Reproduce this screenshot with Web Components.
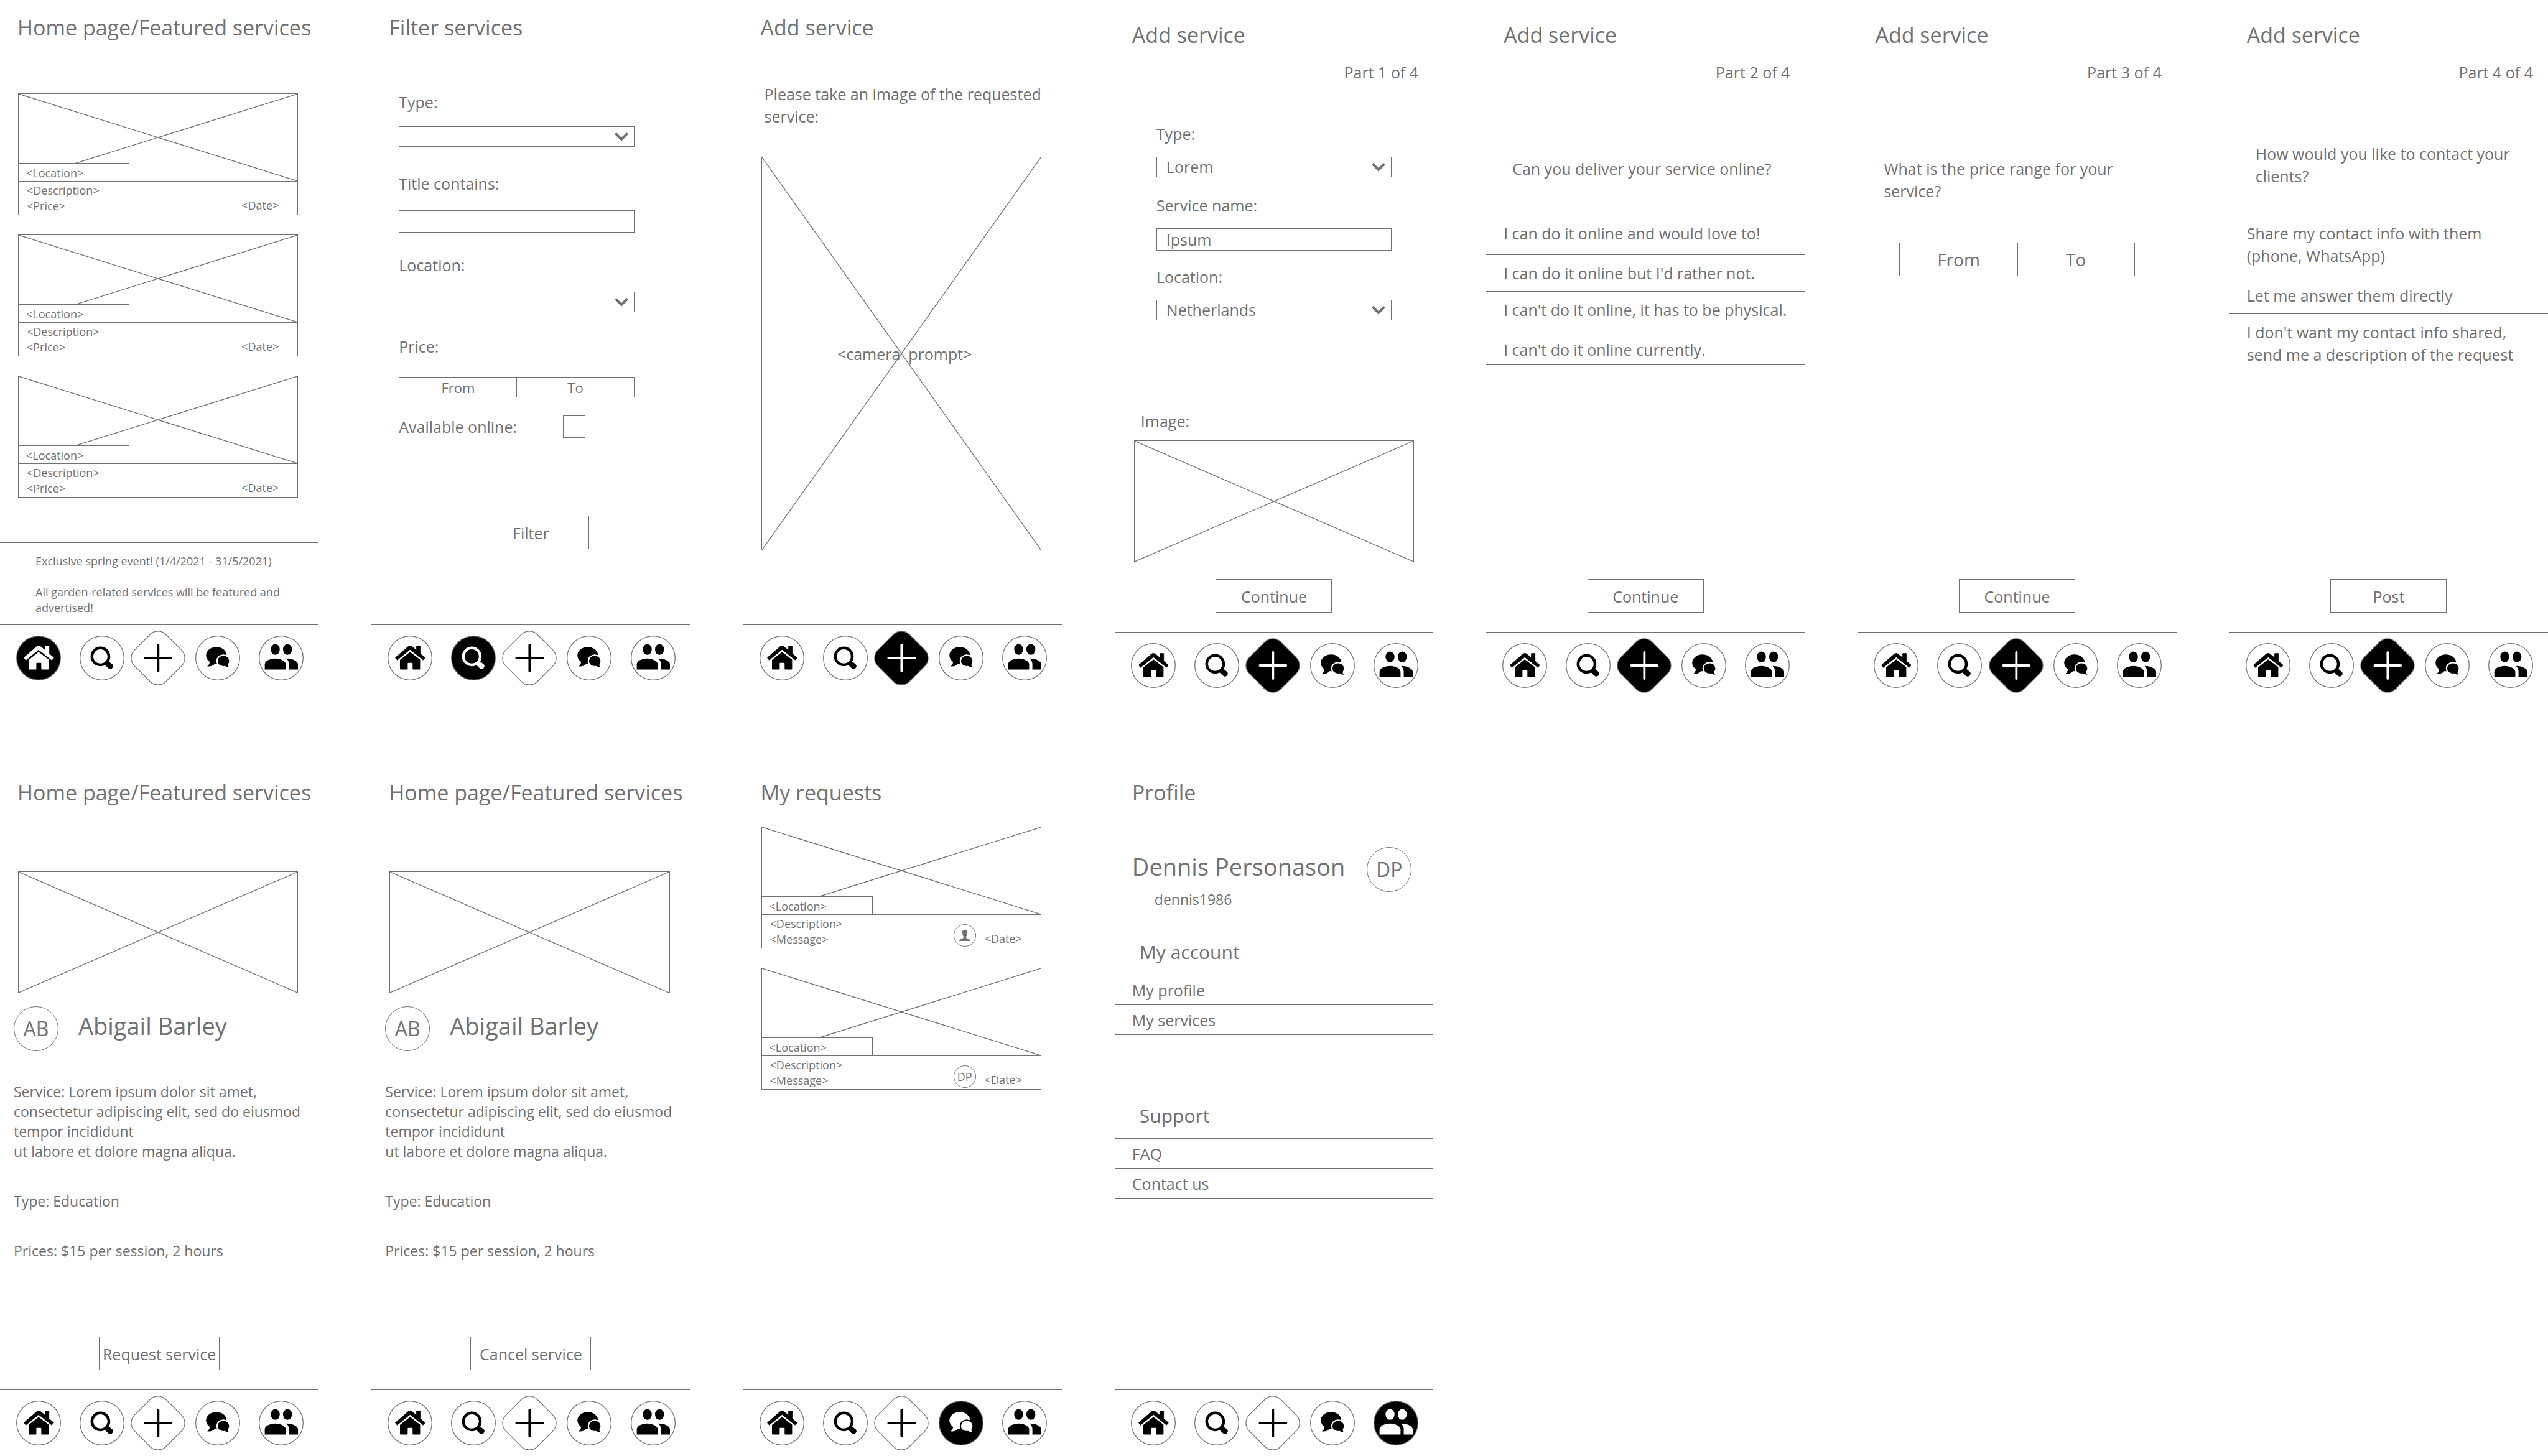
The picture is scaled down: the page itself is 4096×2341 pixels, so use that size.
<!DOCTYPE html>
<html lang="en">
<head>
<meta charset="utf-8">
<title>Service app wireframes</title>
<style>
  :root { --ink: #707070; --paper: #fff; --solid: #000; }
  body { margin: 0; background: var(--paper); color: var(--ink); font: 25px/36px "Open Sans", "Noto Sans", sans-serif; }
</style>
</head>
<body>
<wf-board>
  <wf-screen heading="Home page/Featured services" active="home">
    <wf-stack space="wide">
      <wf-card note="&lt;Price&gt;"></wf-card>
      <wf-card note="&lt;Price&gt;"></wf-card>
      <wf-card note="&lt;Price&gt;"></wf-card>
    </wf-stack>
    <wf-notice slot="foot">
      <p>Exclusive spring event! (1/4/2021 - 31/5/2021)</p>
      <p>All garden-related services will be featured and advertised!</p>
    </wf-notice>
  </wf-screen>

  <wf-screen heading="Filter services" active="search">
    <wf-filter-form></wf-filter-form>
  </wf-screen>

  <wf-screen heading="Add service" active="add">
    <wf-camera>Please take an image of the requested service:</wf-camera>
  </wf-screen>

  <wf-screen heading="Add service" active="add" step="1">
    <wf-service-form></wf-service-form>
    <wf-action slot="foot" label="Continue"></wf-action>
  </wf-screen>

  <wf-screen heading="Add service" active="add" step="2">
    <wf-question>Can you deliver your service online?</wf-question>
    <wf-options>
      <wf-option align="start">I can do it online and would love to!</wf-option>
      <wf-option>I can do it online but I'd rather not.</wf-option>
      <wf-option>I can't do it online, it has to be physical.</wf-option>
      <wf-option align="end">I can't do it online currently.</wf-option>
    </wf-options>
    <wf-action slot="foot" label="Continue"></wf-action>
  </wf-screen>

  <wf-screen heading="Add service" active="add" step="3">
    <wf-question>What is the price range for your service?</wf-question>
    <wf-range size="large"></wf-range>
    <wf-action slot="foot" label="Continue"></wf-action>
  </wf-screen>

  <wf-screen heading="Add service" active="add" step="4">
    <wf-question tall>How would you like to contact your clients?</wf-question>
    <wf-options>
      <wf-option align="start" lines="2">Share my contact info with them (phone, WhatsApp)</wf-option>
      <wf-option>Let me answer them directly</wf-option>
      <wf-option lines="2">I don't want my contact info shared, send me a description of the request</wf-option>
    </wf-options>
    <wf-action slot="foot" label="Post"></wf-action>
  </wf-screen>

  <wf-screen heading="Home page/Featured services">
    <wf-service></wf-service>
    <wf-action slot="foot" label="Request service" wide></wf-action>
  </wf-screen>

  <wf-screen heading="Home page/Featured services">
    <wf-service></wf-service>
    <wf-action slot="foot" label="Cancel service" wide></wf-action>
  </wf-screen>

  <wf-screen heading="My requests" active="chat">
    <wf-stack>
      <wf-card note="&lt;Message&gt;"><wf-avatar size="small"></wf-avatar></wf-card>
      <wf-card note="&lt;Message&gt;"><wf-avatar size="small">DP</wf-avatar></wf-card>
    </wf-stack>
  </wf-screen>

  <wf-screen heading="Profile" active="people">
    <wf-profile></wf-profile>
  </wf-screen>
</wf-board>

<script>
const define = (name, css, html) => {
  const template = document.createElement('template');
  customElements.define(name, class extends HTMLElement {
    constructor() {
      super();
      this.attachShadow({ mode: 'open' });
    }
    connectedCallback() {
      if (this.shadowRoot.childNodes.length) return;
      const markup = typeof html === 'function' ? html(this) : html;
      template.innerHTML = `<style>*{box-sizing:border-box}:host{display:block;box-sizing:border-box}h2,h3,p{margin:0;font-weight:400}button,input,select{font:inherit;color:inherit;margin:0;border-radius:0;outline:0}${css}</style>${markup}`;
      this.shadowRoot.append(template.content.cloneNode(true));
    }
  });
};
const escape = text => text.replace(/&/g, '&amp;').replace(/</g, '&lt;').replace(/>/g, '&gt;');

/* Board: seven phone screens per row */
define('wf-board', `
  :host { display: grid; grid-template-columns: repeat(7, minmax(0, 1fr)); align-items: start; column-gap: 85px; row-gap: 109px; }
`, '<slot></slot>');

/* Phone screen: heading, optional step counter, content, footer, tab bar */
define('wf-screen', `
  :host { display: flex; flex-direction: column; min-height: 1109px; }
  :host([step]) { margin-top: 12px; }
  h2 { font-size: 34px; line-height: 44px; padding: 22px 0 0 28px; white-space: nowrap; }
  .step { line-height: 34px; margin-top: 21px; padding-right: 24px; text-align: right; }
  .content { display: flex; flex-direction: column; flex: 1; }
`, el => `
  <h2>${el.getAttribute('heading')}</h2>
  ${el.hasAttribute('step') ? `<p class="step">Part ${el.getAttribute('step')} of 4</p>` : ''}
  <div class="content"><slot></slot></div>
  <slot name="foot"></slot>
  <wf-tabs active="${el.getAttribute('active') || ''}"></wf-tabs>
`);

/* Tab bar */
const tabs = [
  ['home', 'Home', '<path stroke-width="2" d="M36 103 96 51Q105 44 114 51L135 68V50Q135 48 137 48H151Q153 48 153 50V84L175 103 166 114 105 65 45 114Z"/><path d="M105 76 58 113V155Q58 158 61 158H91Q94 158 94 155V130Q94 127 97 127H114Q117 127 117 130V155Q117 158 120 158H149Q152 158 152 155V112Z"/>'],
  ['search', 'Search', '<circle cx="97" cy="97" r="39.5" fill="none" stroke-width="13"/><path d="M116 135 133 152A13.5 13.5 0 0 0 153 134L137 121Q132 124 127 118L116 128Q121 133 116 135Z"/>'],
  ['add', 'Add', '<path fill="none" stroke-width="11" stroke-linecap="round" d="M1-61V61M-60 0H62"/>'],
  ['chat', 'Messages', '<ellipse cx="98" cy="92" rx="48" ry="39"/><path d="M66 116Q70 134 55 143 80 146 92 129Z"/><ellipse cx="131" cy="118" rx="33" ry="30" class="gap"/><ellipse cx="131" cy="118" rx="27" ry="24"/><path d="M154 130Q150 141 158 148 145 148 136 140Z"/>'],
  ['people', 'Profile', '<ellipse cx="77" cy="64" rx="21" ry="25"/><ellipse cx="134" cy="64" rx="21" ry="25"/><path d="M28 158V134C28 117 55 107 77 107S126 119 126 134V158Z"/><path d="M129 107C160 107 183 121 183 134V158H141V134Q141 119 129 107Z"/>']
];
define('wf-tabs', `
  :host { border-top: 1px solid var(--ink); height: 105px; }
  nav { display: flex; justify-content: space-between; align-items: center; padding: 10px 24px 0 26px; }
  a { display: block; width: 72px; height: 86px; padding: 7px 0; }
  a.add { width: 84px; margin: 0 -12px 0 -18px; padding: 1px 0; }
  svg { display: block; width: 100%; height: 100%; overflow: visible; }
  .frame { fill: var(--paper); stroke: var(--ink); stroke-width: 3.5; }
  .icon { fill: var(--solid); stroke: var(--solid); stroke-width: 0; stroke-linejoin: round; }
  .gap { fill: var(--paper); }
  .on .frame { fill: var(--solid); }
  .on .icon { fill: var(--paper); stroke: var(--paper); }
  .on .gap { fill: var(--solid); }
`, el => `<nav>${tabs.map(([id, name, art]) => `
  <a href="#${id}" aria-label="${name}" class="${id}${el.getAttribute('active') === id ? ' on' : ''}">
    <svg viewBox="${id === 'add' ? '-122 -122 244 244' : '0 0 209 209'}" aria-hidden="true">
      ${id === 'add' ? '<rect class="frame" x="-104" y="-104" width="208" height="208" rx="53" transform="rotate(45)"/>' : '<circle class="frame" cx="104.5" cy="104.5" r="102.5"/>'}
      <g class="icon">${art}</g>
    </svg>
  </a>`).join('')}</nav>`);

/* Crossed box that stands for a picture */
define('wf-picture', `
  :host { display: grid; border: 1px solid var(--ink); height: 196px; }
  svg { grid-area: 1/1; display: block; width: 100%; height: 100%; min-height: 0; }
  path { stroke: var(--ink); stroke-width: 1.3; vector-effect: non-scaling-stroke; }
  ::slotted(.tab) { grid-area: 1/1; place-self: end start; width: 178px; height: 29px; padding: 3px 12px 0; box-sizing: border-box; background: var(--paper); border: solid var(--ink); border-width: 1px 1px 0 0; }
  ::slotted(.prompt) { grid-area: 1/1; place-self: center; padding-left: 11px; white-space: pre; }
`, '<svg viewBox="0 0 100 100" preserveAspectRatio="none" aria-hidden="true"><path d="M0 0 100 100M100 0 0 100"/></svg><slot></slot>');

/* Column of cards */
define('wf-stack', `
  :host { display: flex; flex-direction: column; gap: 31px; padding: 33px 33px 0 29px; }
  :host([space="wide"]) { padding-top: 84px; }
`, '<slot></slot>');

/* Service card */
define('wf-card', `
  :host { font-size: 18px; line-height: 25px; }
  wf-picture { height: 142px; }
  .info { display: flex; justify-content: space-between; height: 54px; padding: 2px 30px 2px 13px; border: solid var(--ink); border-width: 0 1px 1px; }
  .side { display: flex; align-items: flex-end; gap: 14px; }
`, el => `
  <wf-picture><span class="tab">&lt;Location&gt;</span></wf-picture>
  <div class="info">
    <div><p>&lt;Description&gt;</p><p>${escape(el.getAttribute('note'))}</p></div>
    <div class="side"><slot></slot><span>&lt;Date&gt;</span></div>
  </div>
`);

/* Round badge with initials, or a person when it has none */
define('wf-avatar', `
  :host { display: grid; place-items: center; flex: none; width: 72px; height: 72px; border: 1px solid var(--ink); border-radius: 50%; font-size: 32px; line-height: 44px; }
  :host([size="small"]) { width: 36px; height: 36px; font-size: 18px; line-height: 25px; }
  svg { display: block; width: 18px; height: 18px; fill: var(--ink); }
`, el => el.textContent.trim() ? '<slot></slot>' : `
  <svg viewBox="0 0 18 18" aria-hidden="true"><path d="M5.1 2.6Q5.3 0 9 0T12.9 2.6V6Q12.5 9.5 11.2 10.5V12.6Q11.4 14 16.8 15.8 18 16.4 18 18H0Q0 16.4 1.2 15.8 6.6 14 6.8 12.6V10.5Q5.5 9.5 5.1 6Z"/></svg>`);

/* Announcement above the tab bar */
define('wf-notice', `
  :host { display: flex; flex-direction: column; gap: 25px; border-top: 1px solid var(--ink); padding: 17px 30px 14px 57px; font-size: 18px; line-height: 25px; }
  ::slotted(p) { margin: 0; }
`, '<slot></slot>');

/* Labelled control: text box or drop-down */
define('wf-field', `
  :host { display: flex; flex-direction: column; gap: 20px; }
  :host([space="medium"]) { gap: 22px; }
  :host([space="wide"]) { gap: 26px; }
  label { line-height: 34px; align-self: flex-start; }
  .control { display: grid; align-items: center; height: 33px; }
  input, select { grid-area: 1/1; width: 100%; height: 100%; padding: 0 15px; border: 1px solid var(--ink); background: var(--paper); appearance: none; line-height: 31px; }
  svg { grid-area: 1/1; justify-self: end; width: 22px; height: 14px; margin-right: 10px; fill: var(--ink); pointer-events: none; }
`, el => {
  const value = el.getAttribute('value') || '';
  const control = el.getAttribute('kind') === 'select'
    ? `<select id="control"><option>${value}</option></select><svg viewBox="0 0 22 14" aria-hidden="true"><path d="M0 2.7 2.8 0 11 8 19.2 0 22 2.7 11 13.8Z"/></svg>`
    : `<input id="control" type="text" value="${value}">`;
  return `<label for="control">${el.getAttribute('label')}</label><div class="control">${control}</div>`;
});

/* Pair of price limits */
define('wf-range', `
  :host { display: grid; grid-template-columns: 1fr 1fr; height: 33px; border: 1px solid var(--ink); font-size: 22px; }
  :host([size="large"]) { height: 54px; margin: 4px 67px 0; font-size: 28px; }
  input { width: 100%; min-width: 0; height: 100%; padding: 0; border: 0; background: none; text-align: center; }
  input + input { border-left: 1px solid var(--ink); }
  input::placeholder { color: inherit; opacity: 1; }
`, '<input type="text" inputmode="numeric" placeholder="From" aria-label="Price from"><input type="text" inputmode="numeric" placeholder="To" aria-label="Price to">');

/* Main button of a screen */
define('wf-action', `
  :host { display: flex; justify-content: center; margin-bottom: 31px; }
  button { min-width: 187px; height: 54px; padding: 2px 0 0; border: 1px solid var(--ink); background: var(--paper); line-height: 34px; }
  :host([wide]) button { min-width: 194px; }
`, el => `<button type="button">${el.getAttribute('label')}</button>`);

/* Filter form */
define('wf-filter-form', `
  :host { display: flex; flex: 1; padding-top: 81px; }
  form { display: flex; flex-direction: column; flex: 1; }
  .fields { display: flex; flex-direction: column; gap: 37px; padding: 0 90px 0 44px; }
  wf-field { min-height: 94px; }
  .price { display: flex; flex-direction: column; gap: 32px; line-height: 34px; }
  .online { display: flex; gap: 74px; align-items: center; line-height: 34px; margin-top: -8px; }
  input { width: 36px; height: 36px; border: 1px solid var(--ink); appearance: none; background: var(--paper); }
  wf-action { margin: auto 0 121px; }
`, `
  <form>
    <div class="fields">
      <wf-field space="medium" kind="select" label="Type:"></wf-field>
      <wf-field space="wide" label="Title contains:"></wf-field>
      <wf-field space="wide" kind="select" label="Location:"></wf-field>
      <div class="price"><span>Price:</span><wf-range></wf-range></div>
      <div class="online"><label for="online">Available online:</label><input id="online" type="checkbox"></div>
    </div>
    <wf-action label="Filter"></wf-action>
  </form>
`);

/* First step of the add-service form */
define('wf-service-form', `
  :host { display: flex; flex-direction: column; flex: 1; padding: 65px 0 27px; }
  .fields { display: flex; flex-direction: column; gap: 28px; padding: 0 67px; }
  .caption { margin-top: auto; padding-left: 42px; line-height: 34px; }
  wf-picture { margin: 14px 31px 0; }
`, `
  <div class="fields">
    <wf-field kind="select" label="Type:" value="Lorem"></wf-field>
    <wf-field label="Service name:" value="Ipsum"></wf-field>
    <wf-field kind="select" label="Location:" value="Netherlands"></wf-field>
  </div>
  <p class="caption">Image:</p>
  <wf-picture></wf-picture>
`);

/* Camera step */
define('wf-camera', `
  :host { display: flex; flex-direction: column; flex: 1; gap: 47px; padding: 67px 33px 119px 29px; }
  p { padding-left: 5px; }
  wf-picture { flex: 1; height: auto; }
`, '<p><slot></slot></p><wf-picture><span class="prompt">&lt;camera  prompt&gt;</span></wf-picture>');

/* Question of a step */
define('wf-question', `
  :host { padding: 120px 30px 61px 42px; }
  :host([tall]) { padding: 96px 50px 49px 42px; }
`, '<slot></slot>');

/* Ruled list of answers */
define('wf-options', `
  :host { border-top: 1px solid var(--ink); }
`, '<slot></slot>');
define('wf-option', `
  button { display: flex; align-items: center; width: 100%; height: 59px; padding: 6px 28px; border: 0; border-bottom: 1px solid var(--ink); background: none; text-align: left; line-height: 36px; white-space: nowrap; }
  :host([lines="2"]) button { height: 95px; white-space: normal; }
  :host([align="start"]) button { align-items: flex-start; }
  :host([align="end"]) button { align-items: flex-end; }
`, '<button type="button"><slot></slot></button>');

/* Name beside a badge */
const nameCss = '.name { font-size: 38px; line-height: 52px; padding-top: 5px; white-space: nowrap; }';

/* Service details */
define('wf-service', `
  :host { padding-top: 105px; }
  wf-picture { margin: 0 33px 0 29px; }
  .person { display: flex; gap: 32px; margin: 21px 0 0 22px; }
  ${nameCss}
  .text { display: flex; flex-direction: column; gap: 48px; padding: 49px 24px 0 22px; font-size: 23px; line-height: 32px; }
`, `
  <wf-picture></wf-picture>
  <div class="person"><wf-avatar>AB</wf-avatar><h3 class="name">Abigail Barley</h3></div>
  <div class="text">
    <p>Service: Lorem ipsum dolor sit amet, consectetur adipiscing elit, sed do eiusmod tempor incididunt<br>ut labore et dolore magna aliqua.</p>
    <p>Type: Education</p>
    <p>Prices: $15 per session, 2 hours</p>
  </div>
`);

/* Titled list of links */
define('wf-menu', `
  h3 { font-size: 30px; line-height: 41px; padding: 0 0 16px 40px; }
  ul { margin: 0; padding: 0; list-style: none; border-top: 1px solid var(--ink); }
  a { display: flex; align-items: center; height: 48px; padding-left: 28px; border-bottom: 1px solid var(--ink); color: inherit; text-decoration: none; }
`, el => `
  <h3>${el.getAttribute('heading')}</h3>
  <ul>${el.getAttribute('items').split(',').map(item => `<li><a href="#">${item}</a></li>`).join('')}</ul>
`);

/* Profile page */
define('wf-profile', `
  :host { padding-top: 66px; }
  .person { display: flex; justify-content: space-between; padding: 0 35px 0 28px; }
  ${nameCss}
  .user { font-size: 23px; line-height: 32px; padding: 11px 0 0 36px; }
  .menus { display: flex; flex-direction: column; gap: 109px; padding-top: 48px; }
`, `
  <div class="person">
    <div><h3 class="name">Dennis Personason</h3><p class="user">dennis1986</p></div>
    <wf-avatar>DP</wf-avatar>
  </div>
  <div class="menus">
    <wf-menu heading="My account" items="My profile,My services"></wf-menu>
    <wf-menu heading="Support" items="FAQ,Contact us"></wf-menu>
  </div>
`);
</script>
</body>
</html>
